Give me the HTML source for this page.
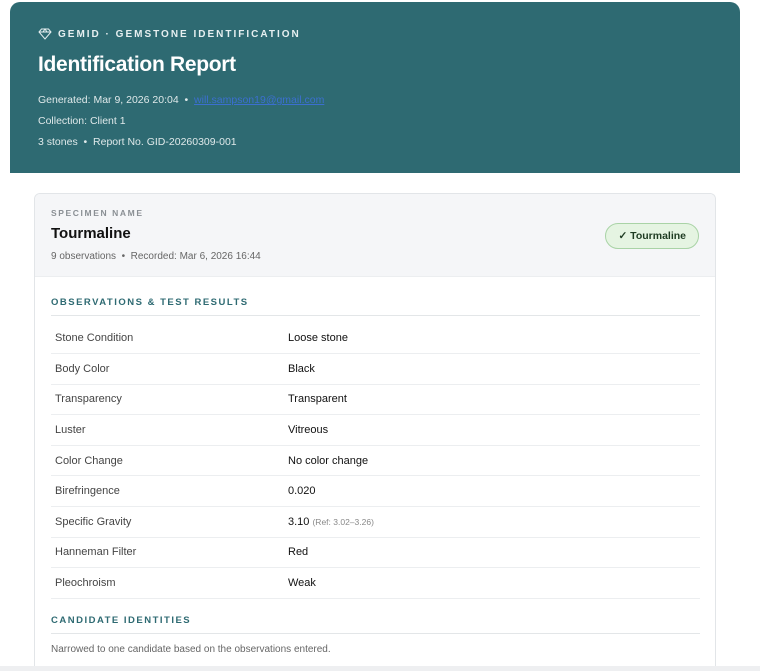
<!DOCTYPE html>
<html><head><style>
*{margin:0;padding:0;box-sizing:border-box}
html,body{width:760px;height:671px;overflow:hidden}
body{background:#fff;font-family:"Liberation Sans",Arial,sans-serif;position:relative;color:#222}
.hdr{position:absolute;left:10px;top:2px;width:730px;height:171px;background:#2e6a72;border-radius:10px 10px 0 0;color:#fff}
.brand{position:absolute;left:28px;top:26px;font-size:10px;font-weight:bold;letter-spacing:2px;color:#e6eff0}
.brand svg{vertical-align:-3px;margin-right:6px}
.title{position:absolute;left:28px;top:51px;font-size:21px;font-weight:bold;letter-spacing:-0.3px}
.meta{position:absolute;left:28px;font-size:10.5px;color:#dfe9ea}
.link{color:#3b6fd0;text-decoration:underline}
.card{position:absolute;left:34px;top:193px;width:682px;height:473px;border:1px solid #e2e5e8;border-bottom:none;border-radius:6px 6px 0 0;background:#fff;overflow:hidden}
.top{height:83px;background:#f5f6f8;border-bottom:1px solid #eceef0;position:relative}
.lbl{position:absolute;left:16px;top:14px;font-size:8.5px;letter-spacing:1.6px;color:#8a8f94;font-weight:bold}
.name{position:absolute;left:16px;top:31px;font-size:15px;font-weight:bold;color:#111}
.sub{position:absolute;left:16px;top:57px;font-size:10px;color:#666}
.badge{position:absolute;right:16px;top:29px;height:26px;padding:0 12px;border:1px solid #a9d3a6;background:#e5f4e2;border-radius:13px;font-size:10.5px;font-weight:bold;line-height:24px;color:#1e3b22}
.sec{position:absolute;left:16px;width:649px;font-size:9.5px;letter-spacing:1.5px;font-weight:bold;color:#2e6a72;border-bottom:1.5px solid #e3e6e8;padding-bottom:7px}
table{position:absolute;left:16px;top:129px;width:649px;border-collapse:collapse;font-size:11px}
td{height:30.6px;border-bottom:1px solid #eceef0;padding-left:4px;color:#444}
td+td{color:#111}
td:first-child{width:233px}
.ref{font-size:8.5px;color:#888}
.note{position:absolute;left:16px;top:450px;font-size:10px;color:#666}
.band{position:absolute;left:0;top:666px;width:760px;height:5px;background:#eeeff1}
</style></head><body>
<div class="hdr">
<div class="brand"><svg width="14" height="12" viewBox="0 0 14 12" fill="none" stroke="#e6eff0" stroke-width="1"><path d="M3.5 1h7l2.5 3-6 7-6-7z M1 4h12 M5 4l2 -3 2 3"/></svg>GEMID · GEMSTONE IDENTIFICATION</div>
<div class="title">Identification Report</div>
<div class="meta" style="top:92px">Generated: Mar 9, 2026 20:04 &nbsp;•&nbsp; <span class="link">will.sampson19@gmail.com</span></div>
<div class="meta" style="top:113px">Collection: Client 1</div>
<div class="meta" style="top:134px">3 stones &nbsp;•&nbsp; Report No. GID-20260309-001</div>
</div>
<div class="card">
<div class="top">
<div class="lbl">SPECIMEN NAME</div>
<div class="name">Tourmaline</div>
<div class="sub">9 observations &nbsp;•&nbsp; Recorded: Mar 6, 2026 16:44</div>
<div class="badge">✓ Tourmaline</div>
</div>
<div class="sec" style="top:103px">OBSERVATIONS &amp; TEST RESULTS</div>
<table>
<tr><td>Stone Condition</td><td>Loose stone</td></tr>
<tr><td>Body Color</td><td>Black</td></tr>
<tr><td>Transparency</td><td>Transparent</td></tr>
<tr><td>Luster</td><td>Vitreous</td></tr>
<tr><td>Color Change</td><td>No color change</td></tr>
<tr><td>Birefringence</td><td>0.020</td></tr>
<tr><td>Specific Gravity</td><td>3.10 <span class="ref">(Ref: 3.02–3.26)</span></td></tr>
<tr><td>Hanneman Filter</td><td>Red</td></tr>
<tr><td>Pleochroism</td><td>Weak</td></tr>
</table>
<div class="sec" style="top:421px">CANDIDATE IDENTITIES</div>
<div class="note">Narrowed to one candidate based on the observations entered.</div>
</div>
<div class="band"></div>
</body></html>
